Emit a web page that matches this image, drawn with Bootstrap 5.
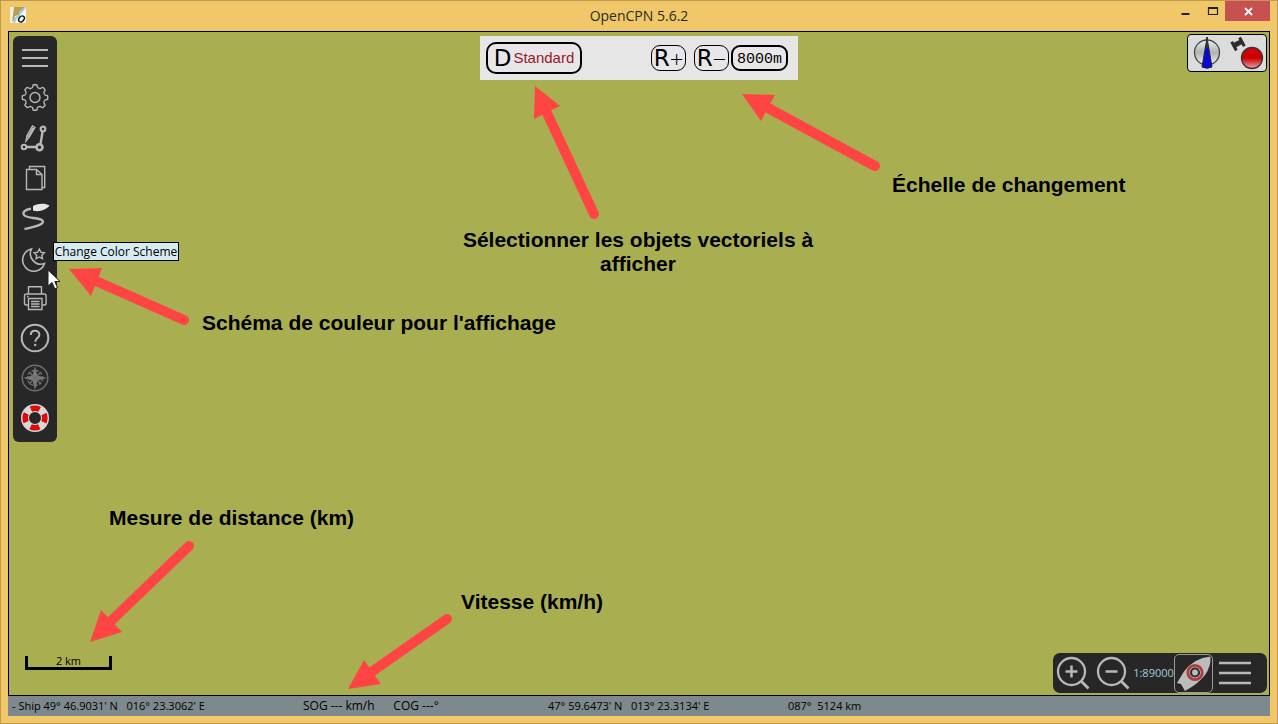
<!DOCTYPE html>
<html lang="fr">
<head>
<meta charset="utf-8">
<meta name="viewport" content="width=device-width, initial-scale=1">
<title>OpenCPN 5.6.2</title>
<link href="https://cdn.jsdelivr.net/npm/bootstrap@5.3.0/dist/css/bootstrap.min.css" rel="stylesheet">
<style>
body { font-family: "Open Sans", "Noto Sans", sans-serif; font-size: 12px; color: #000; background: #f0c869; }
.app-window { min-height: 100vh; border: 1px solid #c19a4e; padding: 0 7px 7px; }
.title-bar { display: grid; grid-template-columns: 1fr auto 1fr; height: 30px; }
.title-text { font-size: 14px; line-height: 30px; font-weight: 400; color: #2b2b20; }
.app-icon { margin: 1px 0 0 1px; }
.caption-btn { border: 0; background: none; padding: 0; width: 27px; height: 20px; display: flex; }
.caption-close { width: 45px; background: #c75050; }
.chart { background: #a9af50; border: 1px solid #000; min-height: 600px; }
.chart-top { display: grid; grid-template-columns: 1fr auto 1fr; align-items: start; padding: 4px 4px 0; }
.tool-bar { width: 44px; background: #272727; border-radius: 6px; padding: 2px 0 4px; }
.tool-btn { display: block; width: 40px; height: 40px; padding: 0; border: 0; background: none; color: #b8b8b8; }
.tool-btn svg { display: block; fill: none; stroke: currentColor; stroke-width: 1.4; }
.panel-bar { background: #e6e6e6; width: 318px; height: 44px; padding: 0 10px 0 6px; }
.key-btn { border: 1px solid #000; border-radius: 9px; background: #e8e6e8; padding: 0; height: 26px; width: 35px; line-height: 22px; display: flex; align-items: center; justify-content: center; color: #000; }
.key-wide { width: 96px; height: 32px; border-width: 2px; border-radius: 10px; gap: 2px; }
.key-scale { width: 57px; border-width: 2px; margin-left: 2px; padding-top: 3px; font-family: "Liberation Mono", monospace; font-size: 15px; }
.key-letter { font-family: "DejaVu Sans", sans-serif; font-size: 23px; }
.key-sign { font-weight: 300; font-size: 24px; padding-top: 2px; }
.key-name { font-family: "Liberation Sans", sans-serif; font-size: 15px; color: #98181c; }
.gps-box { width: 80px; height: 38px; background: #dcdcdc; border: 1px solid #000; border-radius: 4px; margin: -2px -2px 0 0; }
.chart-bottom { padding: 0 2px 2px 16px; }
.scale-bar { width: 87px; height: 14px; border: 3px solid #000; border-top: 0; font-size: 11px; line-height: 9px; margin-bottom: 23px; }
.zoom-bar { background: #272727; border-radius: 7px; width: 214px; height: 40px; }
.zoom-label { width: 41px; color: #a9c9dc; font-size: 11px; text-align: center; white-space: nowrap; }
.boat-btn { width: 39px; height: 39px; border: 1px solid #999; border-radius: 5px; }
.notes { pointer-events: none; }
.note { position: absolute; font: bold 21px/24px "Liberation Sans", Arial, sans-serif; text-align: center; white-space: nowrap; margin: 0; }
.note-colors { left: 193px; top: 279px; }
.note-objects { left: 444px; top: 196px; width: 370px; white-space: normal; }
.note-scale { left: 883px; top: 141px; }
.note-distance { left: 100px; top: 474px; }
.note-speed { left: 452px; top: 558px; }
.tip { left: 44px; top: 210px; background: #d5ebef; border: 1px solid #000; height: 19px; width: 126px; line-height: 17px; text-align: center; white-space: nowrap; }
.pointer { left: 38px; top: 237px; }
.status-line { display: grid; grid-template-columns: 291fr 245fr 240fr 482fr; background: #7d898c; height: 20px; line-height: 20px; padding-left: 4px; white-space: pre; }
.status-pos { font-size: 11px; }
</style>
</head>
<body>
<div class="app-window d-flex flex-column">
  <header class="title-bar">
    <div class="pt-1">
      <svg class="app-icon d-block" width="20" height="20" viewBox="0 0 20 20"><path d="M1 1h16v16H1z" fill="#f4f8fa"/><path d="M1 1h3L2 17H1z" fill="#f7efd8"/><path d="M5 1h11l-3 3-2 1-1 4-4 1-1 4-2 2z" fill="#b8a04c"/><path d="M16 1l-3 4-2 2-1 3-3 2-2 5" fill="none" stroke="#9cc8e6" stroke-width="2"/><ellipse cx="12.500" cy="13" rx="2.400" ry="3.400" transform="rotate(40 12.500 13)" fill="none" stroke="#111" stroke-width="1.300"/></svg>
    </div>
    <h1 class="title-text m-0">OpenCPN 5.6.2</h1>
    <div class="d-flex justify-content-end">
      <button class="caption-btn" aria-label="Réduire"><svg width="27" height="20"><path d="M10.500 13h8" stroke="#222" stroke-width="2"/></svg></button>
      <button class="caption-btn" aria-label="Agrandir"><svg width="27" height="20"><path d="M10.500 6.500h9v7h-9zM10.500 7.500h9" fill="none" stroke="#222" stroke-width="1.200"/></svg></button>
      <button class="caption-btn caption-close" aria-label="Fermer"><svg width="45" height="20"><path d="M20 7l7 7m0-7l-7 7" stroke="#fff" stroke-width="1.800"/></svg></button>
    </div>
  </header>

  <main class="chart flex-grow-1 position-relative d-flex flex-column justify-content-between">
    <div class="chart-top">
      <nav class="tool-bar d-flex flex-column align-items-center" aria-label="Outils">
        <button class="tool-btn" aria-label="Menu"><svg width="40" height="40"><path d="M7 12h26M7 20h26M7 28h26" stroke-width="2"/></svg></button>
        <button class="tool-btn" aria-label="Options"><svg width="40" height="40"><defs><path id="tooth" d="M-3.800-9.200Q-2.600-9.800-2.400-10.400L-2-12.100Q-1.900-12.700-1.300-12.700H1.300Q1.900-12.700 2-12.100L2.400-10.400Q2.600-9.800 3.800-9.200"/></defs><g transform="translate(20 19.500)"><use href="#tooth"/><use href="#tooth" transform="rotate(45)"/><use href="#tooth" transform="rotate(90)"/><use href="#tooth" transform="rotate(135)"/><use href="#tooth" transform="rotate(180)"/><use href="#tooth" transform="rotate(225)"/><use href="#tooth" transform="rotate(270)"/><use href="#tooth" transform="rotate(315)"/><circle r="5"/></g></svg></button>
        <button class="tool-btn" aria-label="Route"><svg width="40" height="40"><path d="M11.500 29h10M25.500 26l2-12" stroke-width="2.400"/><circle cx="9" cy="29" r="2.300" stroke-width="2"/><circle cx="24.500" cy="29.300" r="3" stroke-width="2.600"/><circle cx="28" cy="11" r="2.300" stroke-width="2.200"/><path d="M11 23l1-5.500 5.500-9.500 2.400 1.400-5.500 9.500zM16.500 9.700l2.600 1.600M12 17.500l2.600 1.600M17.500 11l-4.500 8"/></svg></button>
        <button class="tool-btn" aria-label="Calques"><svg width="40" height="40"><path d="M11.500 11.500h10l5.500 5v15H11.500zM21.500 11.500v5H27M14.500 11V8.500h15.200v21H27"/></svg></button>
        <button class="tool-btn" aria-label="Trace"><svg width="40" height="40"><path d="M16 10.800C10 11.500 6.500 14.500 9.500 17.500s15 2 18 5c3 4-9 6.500-18 8.500" stroke-width="2.400"/><path d="M18 8c5-2.500 12-3 16.500-.500-3 4-10.500 7-16.500 5z" fill="#e6e6e6" stroke="none"/></svg></button>
        <button class="tool-btn" aria-label="Change Color Scheme"><svg width="40" height="40"><path d="M16.500 11A11.200 11.200 0 1 0 29.500 25.500A10.500 10.500 0 0 1 16.500 11Z" stroke-width="1.600"/><path d="M24.300 11l1.500 3.200 3.500.500-2.500 2.500.600 3.500-3.100-1.700-3.200 1.700.600-3.500-2.500-2.500 3.500-.500z"/></svg></button>
        <button class="tool-btn" aria-label="Imprimer"><svg width="40" height="40"><path d="M13.500 16V8.700h13V16M13.500 27h-2.200q-1.800 0-1.800-1.800v-7.400q0-1.800 1.800-1.800h18q1.800 0 1.800 1.800v7.400q0 1.800-1.800 1.800H27M13.500 20.500h13.500v11H13.500zM16 23.500h8.500M16 26h8.500M16 28.500h8.500M12 18.500h1.500" stroke-width="1.400"/></svg></button>
        <button class="tool-btn" aria-label="Aide"><svg width="40" height="40"><circle cx="20" cy="20" r="13.300" stroke-width="2"/><path d="M15.800 17c0-5.500 8.600-5.500 8.600-.300 0 3.300-4.200 3.200-4.200 7" stroke-width="2"/><circle cx="20.200" cy="27" r="1.200" fill="currentColor" stroke="none"/></svg></button>
        <button class="tool-btn" aria-label="Boussole"><svg width="40" height="40"><g stroke="#6c6e70"><circle cx="20" cy="20" r="12.800" stroke-width="1.500"/><circle cx="20" cy="20" r="7.500" stroke-dasharray="3 1.500"/><path d="M20 8l2.500 9.500 9.500 2.500-9.500 2.500-2.500 9.500-2.500-9.500-9.500-2.500 9.500-2.500z" fill="#777" stroke="none"/><path d="M14 14l12 12m0-12l-12 12"/></g></svg></button>
        <button class="tool-btn" aria-label="Homme à la mer"><svg width="40" height="40"><circle cx="20" cy="20" r="10" stroke="#d8d8d8" stroke-width="8"/><circle cx="20" cy="20" r="9.800" stroke="#e00808" stroke-width="5.600" stroke-dasharray="9 6.394" stroke-dashoffset="4.500"/></svg></button>
      </nav>

      <div class="panel-bar d-flex align-items-center">
        <button class="key-btn key-wide me-auto"><span class="key-letter">D</span><span class="key-name">Standard</span></button>
        <button class="key-btn me-2"><span class="key-letter">R</span><span class="key-sign">+</span></button>
        <button class="key-btn"><span class="key-letter">R</span><span class="key-sign">−</span></button>
        <button class="key-btn key-scale">8000m</button>
      </div>

      <div class="gps-box ms-auto">
        <svg class="d-block" width="78" height="36" role="img" aria-label="Boussole et GPS">
          <defs>
            <linearGradient id="dial" x2="0" y2="1"><stop offset="0" stop-color="#eee"/><stop offset=".5" stop-color="#aeb4ae"/><stop offset="1" stop-color="#f2f2f2"/></linearGradient>
            <linearGradient id="lamp" x2="0" y2="1"><stop offset="0" stop-color="#e00000"/><stop offset=".5" stop-color="#c80000"/><stop offset="1" stop-color="#f4a0a0"/></linearGradient>
          </defs>
          <circle cx="19" cy="17.500" r="12.500" fill="url(#dial)" stroke="#444" stroke-width="1.300"/>
          <path d="M19 3l-5 29q5 2.500 10 0z" fill="#0808d8" stroke="#223" stroke-width="1"/><path d="M19 2v11" stroke="#333" stroke-width="2"/>
          <circle cx="64" cy="23" r="10.500" fill="url(#lamp)" stroke="#333" stroke-width="1.300"/>
          <g transform="translate(50 9) rotate(-28)" fill="#2c2c2c"><path d="M-6-5h3v10h-3zM3-5h3v10H3zM-3-3h6v5h-6z"/></g>
        </svg>
      </div>
    </div>

    <div class="chart-bottom d-flex justify-content-between align-items-end">
      <div class="scale-bar text-center">2 km</div>
      <div class="zoom-bar d-flex align-items-center">
        <button class="tool-btn" aria-label="Zoom avant"><svg width="40" height="40"><circle cx="18.500" cy="18.500" r="13.500" stroke-width="2.300"/><path d="M28.500 28.500l7 7" stroke-width="2.800"/><path d="M12.500 18.500h12M18.500 12.500v12" stroke-width="2.500"/></svg></button>
        <button class="tool-btn" aria-label="Zoom arrière"><svg width="40" height="40"><circle cx="18.500" cy="18.500" r="13.500" stroke-width="2.300"/><path d="M28.500 28.500l7 7" stroke-width="2.800"/><path d="M12.500 18.500h12" stroke-width="2.500"/></svg></button>
        <span class="zoom-label">1:89000</span>
        <button class="tool-btn boat-btn" aria-label="Suivre le bateau"><svg width="37" height="37"><path d="M35.500 1.500Q19 3 9 16.500L2 28l4 1 4 7q13-7 20-16Q36 12 35.500 1.500z" fill="#bcbcbc" stroke="none"/><circle cx="20" cy="17.500" r="7.200" stroke="#b23a3c" stroke-width="2.800"/><circle cx="20" cy="17.500" r="4" stroke="#303030" stroke-width="2.200"/></svg></button>
        <button class="tool-btn ms-1" aria-label="Menu de la carte"><svg width="40" height="40"><path d="M2 10h32M2 20h32M2 30h32" stroke-width="2.400"/></svg></button>
      </div>
    </div>

    <div class="notes position-absolute top-0 start-0 w-100 h-100">
      <!-- Arrow coordinates are given on the window's own grid -->
      <svg class="position-absolute w-100 h-100" aria-hidden="true">
        <g transform="translate(-9 -32)" fill="#ff4444" stroke="#ff4444" stroke-linecap="round" stroke-width="10">
          <path d="M96 281L184 320M547 113L594 214M768 108L875 166M110 622L189 546M370 673L447 619"/>
          <path stroke="none" d="M69 269l33-1-11 28zM535 86l25 20-26 13zM742 94l33 1-14 26zM90 642l11-32 21 22zM348 689l16-29 17 24z"/>
        </g>
      </svg>
      <p class="note note-colors">Schéma de couleur pour l'affichage</p>
      <p class="note note-objects">Sélectionner les objets vectoriels à afficher</p>
      <p class="note note-scale">Échelle de changement</p>
      <p class="note note-distance">Mesure de distance (km)</p>
      <p class="note note-speed">Vitesse (km/h)</p>
      <div class="tip position-absolute" role="tooltip">Change Color Scheme</div>
      <svg class="pointer position-absolute" width="14" height="21" aria-hidden="true"><path d="M1 1v16l4-3.500 2.800 6.300 2.700-1.200-2.700-6.100H13z" fill="#fff" stroke="#222"/></svg>
    </div>
  </main>

  <footer class="status-line">
    <span class="status-pos">- Ship 49° 46.9031' N   016° 23.3062' E</span>
    <span>SOG --- km/h      COG ---°</span>
    <span class="status-pos">47° 59.6473' N   013° 23.3134' E</span>
    <span class="status-pos">087°  5124 km</span>
  </footer>
</div>
<script src="https://cdn.jsdelivr.net/npm/bootstrap@5.3.0/dist/js/bootstrap.bundle.min.js"></script>
</body>
</html>
